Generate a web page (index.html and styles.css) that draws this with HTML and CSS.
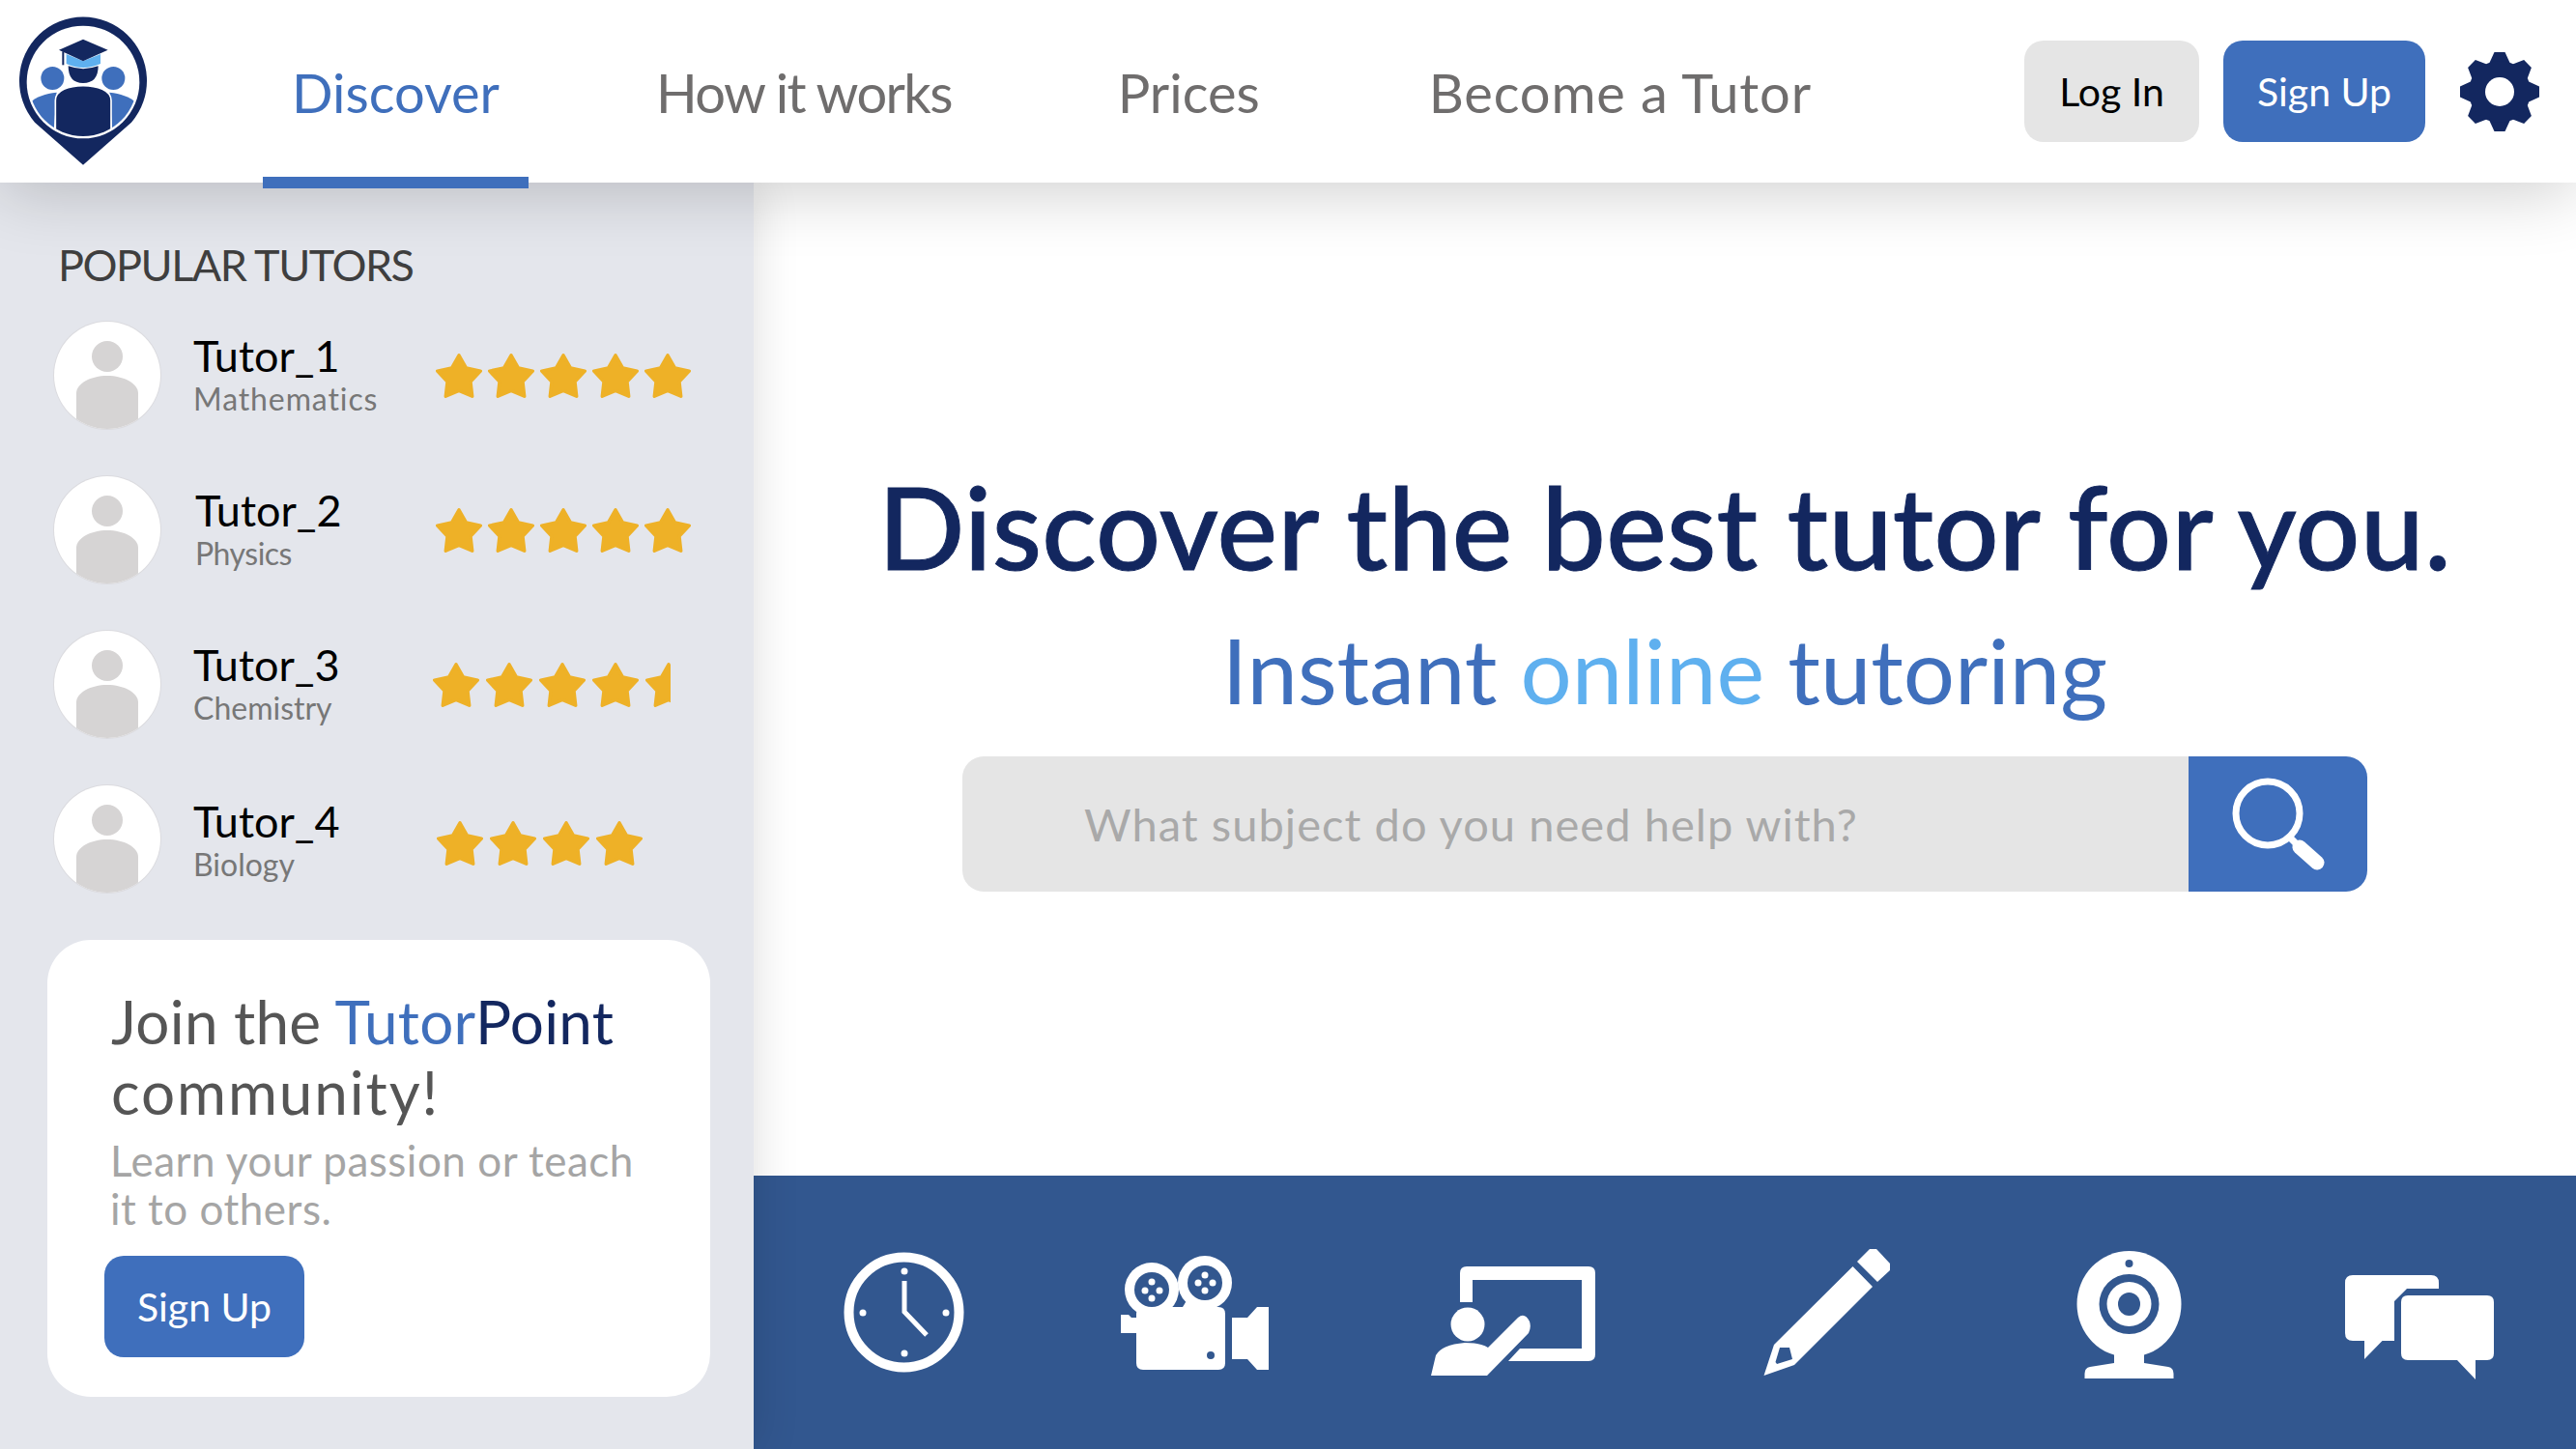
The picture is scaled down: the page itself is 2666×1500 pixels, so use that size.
FILE: index.html
```html
<!doctype html>
<html lang="en">
  <head>
    <meta charset="UTF-8" />
    <title>TutorPoint</title>
    <link rel="stylesheet" href="styles.css">
  </head>
  <body>
    <svg class="defs" aria-hidden="true">
      <symbol id="star" viewBox="3 3 42 40">
        <path d="M24 4.500 30.600 16 43.500 18.700 34.500 28.400 36 41.600 24 36.500 12 41.600 13.500 28.400 4.500 18.700 17.400 16Z" fill="#eeb127" stroke="#eeb127" stroke-width="3" stroke-linejoin="round" />
      </symbol>
      <symbol id="person" viewBox="0 0 110 111">
        <ellipse cx="55" cy="36" rx="16" ry="16" fill="#d6d4d4" />
        <path d="M23 111V74C23 64 38 56 55 56S87 64 87 74V111Z" fill="#d6d4d4" />
      </symbol>
    </svg>

    <header class="topbar">
      <a class="logo" href="#">
        <svg viewBox="0 0 600 570" width="200" height="190">
          <defs>
            <clipPath id="logoClip"><circle cx="258" cy="255" r="168" /></clipPath>
          </defs>
          <path d="M258 512 108 380A198 198 0 1 1 408 380Z" fill="#13275f" />
          <circle cx="258" cy="255" r="175" fill="#fff" />
          <g clip-path="url(#logoClip)">
            <circle cx="163" cy="243" r="36" fill="#3f6fbc" />
            <circle cx="352" cy="243" r="36" fill="#3f6fbc" />
            <path d="M90 320C115 300 140 290 176 287L166 420H90Z" fill="#3f6fbc" />
            <path d="M426 320C400 300 375 290 340 287L350 420H426Z" fill="#3f6fbc" />
            <path d="M172 440V312C172 280 215 266 258 266S345 280 345 312V440Z" fill="#13275f" stroke="#fff" stroke-width="5" />
          </g>
          <path d="M212 205Q258 222 305 205 305 258 258 258 212 258 212 205Z" fill="#13275f" />
          <path d="M206 168 258 190 312 168V198Q258 222 206 198Z" fill="#5fb0ef" />
          <path d="M183 155 258 122 335 155 258 190Z" fill="#13275f" />
          <rect x="193" y="160" width="6" height="42" fill="#13275f" />
        </svg>
      </a>
      <nav class="nav">
        <a class="nav-link active" href="#">Discover</a>
        <a class="nav-link nav-how" href="#">How it works</a>
        <a class="nav-link nav-prices" href="#">Prices</a>
        <a class="nav-link nav-become" href="#">Become a Tutor</a>
      </nav>
      <div class="actions">
        <button class="btn btn-grey">Log In</button>
        <button class="btn btn-blue">Sign Up</button>
        <svg class="gear" viewBox="-41 -41 82 82" width="82" height="82">
          <defs>
            <path id="tooth" d="M-11-29-5.500-41H5.500L11-29Z" fill="#13275f" />
          </defs>
          <use href="#tooth" />
          <use href="#tooth" transform="rotate(45)" />
          <use href="#tooth" transform="rotate(90)" />
          <use href="#tooth" transform="rotate(135)" />
          <use href="#tooth" transform="rotate(180)" />
          <use href="#tooth" transform="rotate(225)" />
          <use href="#tooth" transform="rotate(270)" />
          <use href="#tooth" transform="rotate(315)" />
          <circle r="32" fill="#13275f" />
          <circle r="15" fill="#fff" />
        </svg>
      </div>
    </header>

    <div class="content">
      <aside class="sidebar">
        <h2 class="side-title">POPULAR TUTORS</h2>
        <ul class="tutors">
          <li class="tutor">
            <svg class="avatar"><use href="#person" /></svg>
            <div class="tutor-info">
              <div class="tutor-name">Tutor_1</div>
              <div class="tutor-subject subject-wide">Mathematics</div>
            </div>
            <div class="stars">
              <svg class="star"><use href="#star" /></svg>
              <svg class="star"><use href="#star" /></svg>
              <svg class="star"><use href="#star" /></svg>
              <svg class="star"><use href="#star" /></svg>
              <svg class="star"><use href="#star" /></svg>
            </div>
          </li>
          <li class="tutor tutor-2">
            <svg class="avatar"><use href="#person" /></svg>
            <div class="tutor-info">
              <div class="tutor-name">Tutor_2</div>
              <div class="tutor-subject subject-tight">Physics</div>
            </div>
            <div class="stars">
              <svg class="star"><use href="#star" /></svg>
              <svg class="star"><use href="#star" /></svg>
              <svg class="star"><use href="#star" /></svg>
              <svg class="star"><use href="#star" /></svg>
              <svg class="star"><use href="#star" /></svg>
            </div>
          </li>
          <li class="tutor tutor-3">
            <svg class="avatar"><use href="#person" /></svg>
            <div class="tutor-info">
              <div class="tutor-name">Tutor_3</div>
              <div class="tutor-subject">Chemistry</div>
            </div>
            <div class="stars">
              <svg class="star"><use href="#star" /></svg>
              <svg class="star"><use href="#star" /></svg>
              <svg class="star"><use href="#star" /></svg>
              <svg class="star"><use href="#star" /></svg>
              <span class="star-half"><svg class="star"><use href="#star" /></svg></span>
            </div>
          </li>
          <li class="tutor tutor-4">
            <svg class="avatar"><use href="#person" /></svg>
            <div class="tutor-info">
              <div class="tutor-name">Tutor_4</div>
              <div class="tutor-subject">Biology</div>
            </div>
            <div class="stars">
              <svg class="star"><use href="#star" /></svg>
              <svg class="star"><use href="#star" /></svg>
              <svg class="star"><use href="#star" /></svg>
              <svg class="star"><use href="#star" /></svg>
            </div>
          </li>
        </ul>
        <section class="join">
          <h3 class="join-title">Join the <span class="c-blue">Tutor</span><span class="c-navy">Point</span> <span class="join-wide">community!</span></h3>
          <p class="join-text">Learn your passion or teach it to others.</p>
          <button class="btn btn-blue">Sign Up</button>
        </section>
      </aside>

      <main class="main">
        <section class="hero">
          <h1 class="hero-title">Discover the best tutor for you.</h1>
          <p class="hero-sub">Instant <span class="c-sky">online</span> tutoring</p>
          <form class="search">
            <input class="search-input" type="text" placeholder="What subject do you need help with?" />
            <button class="search-btn" type="button" aria-label="Search">
              <svg viewBox="0 0 185 140" width="185" height="140">
                <circle cx="82" cy="59" r="33" fill="none" stroke="#fff" stroke-width="7" />
                <path d="M105 84 114 93" stroke="#fff" stroke-width="7" />
                <path d="M115 94 133 110" stroke="#fff" stroke-width="15" stroke-linecap="round" />
              </svg>
            </button>
          </form>
        </section>

        <section class="features">
          <svg class="icon icon-clock" viewBox="873 1217 125 283" width="125" height="283">
            <circle cx="935.500" cy="1358.500" r="57" fill="none" stroke="#fff" stroke-width="10" />
            <path d="M936 1326V1358L959 1382" fill="none" stroke="#fff" stroke-width="5" />
            <circle cx="936" cy="1316" r="3.500" fill="#fff" />
            <circle cx="893" cy="1359" r="3.500" fill="#fff" />
            <circle cx="979" cy="1359" r="3.500" fill="#fff" />
            <circle cx="936" cy="1401" r="3.500" fill="#fff" />
          </svg>

          <svg class="icon icon-camera" viewBox="1160 1217 153 283" width="153" height="283">
            <path fill="#fff" d="M1183 1353H1261Q1268 1353 1268 1360V1411Q1268 1418 1261 1418H1183Q1176 1418 1176 1411V1380H1171L1168 1380H1160V1361H1168L1171 1364H1176V1360Q1176 1353 1183 1353Z" />
            <path fill="#fff" d="M1224 1353 1232 1340 1240 1353Z" />
            <path fill="#fff" d="M1275 1364H1291L1301 1353H1313V1418H1301L1291 1407H1275Z" />
            <circle cx="1253" cy="1403" r="4" fill="#32578f" />
            <circle cx="1192" cy="1335" r="28" fill="#fff" />
            <circle cx="1192" cy="1335" r="18" fill="#32578f" />
            <circle cx="1247" cy="1328" r="28" fill="#fff" />
            <circle cx="1247" cy="1328" r="18" fill="#32578f" />
            <g fill="#fff">
              <circle cx="1192" cy="1327" r="3.500" />
              <circle cx="1185" cy="1336" r="3.500" />
              <circle cx="1200" cy="1336" r="3.500" />
              <circle cx="1192" cy="1344" r="3.500" />
              <circle cx="1247" cy="1320" r="3.500" />
              <circle cx="1240" cy="1328" r="3.500" />
              <circle cx="1255" cy="1328" r="3.500" />
              <circle cx="1247" cy="1336" r="3.500" />
            </g>
          </svg>

          <svg class="icon icon-board" viewBox="1481 1217 170 283" width="170" height="283">
            <path fill="#fff" d="M1511 1348V1318Q1511 1311 1518 1311H1644Q1651 1311 1651 1318V1402Q1651 1409 1644 1409H1561L1573 1396H1637V1325H1524V1348Z" />
            <circle cx="1519" cy="1371" r="17.500" fill="#fff" />
            <path fill="#fff" d="M1481 1424 1486 1403Q1492 1392 1516 1390 1532 1390 1540 1395L1571 1364Q1578 1358 1583 1368 1585 1374 1582 1380L1539 1424Z" />
          </svg>

          <svg class="icon icon-pencil" viewBox="1825 1217 132 283" width="132" height="283">
            <path fill="#fff" d="M1922 1306 1935 1293H1942L1956 1308V1315L1943 1327Z" />
            <path fill="#fff" fill-rule="evenodd" d="M1917.500 1311 1938 1332 1857 1413 1825.500 1424 1836 1392ZM1837.500 1410 1842 1395H1852L1855 1407 1839 1412Z" />
          </svg>

          <svg class="icon icon-webcam" viewBox="2149 1217 109 283" width="109" height="283">
            <ellipse cx="2203.500" cy="1350" rx="54" ry="55" fill="#fff" />
            <path fill="#fff" d="M2188 1398H2219V1411L2244 1415Q2249.500 1416 2249.500 1422V1427H2157.500V1422Q2157.500 1416 2163 1415L2188 1411Z" />
            <ellipse cx="2203.500" cy="1308" rx="4" ry="4" fill="#32578f" />
            <ellipse cx="2203.500" cy="1350" rx="31" ry="31" fill="#32578f" />
            <ellipse cx="2203.500" cy="1350" rx="23" ry="23" fill="#fff" />
            <ellipse cx="2203.500" cy="1350" rx="11.500" ry="12" fill="#32578f" />
          </svg>

          <svg class="icon icon-chat" viewBox="2427 1217 154 283" width="154" height="283">
            <path fill="#fff" d="M2524 1334H2491L2478 1347V1388H2465.500L2447 1407V1388H2435Q2427 1388 2427 1380V1328Q2427 1320 2435 1320H2516Q2524 1320 2524 1328Z" />
            <path fill="#fff" d="M2492 1341H2574Q2581 1341 2581 1348V1401Q2581 1408 2574 1408H2562V1428L2543 1408H2492Q2485 1408 2485 1401V1348Q2485 1341 2492 1341Z" />
          </svg>
        </section>
      </main>
    </div>
  </body>
</html>
```

FILE: styles.css
```css
:root {
  --navy: #13275f;
  --blue: #3f6fbc;
  --sky: #5fb0ef;
  --band: #32578f;
  --side: #e4e6ec;
  --grey: #e5e5e5;
}

* {
  box-sizing: border-box;
}

body {
  font-family: Lato, "Open Sans", sans-serif;
  margin: 0;
  height: 1500px;
  overflow: hidden;
  background: #fff;
  display: flex;
  flex-direction: column;
}

a {
  text-decoration: none;
  color: inherit;
}

.defs {
  display: none;
}

/* header */
.topbar {
  height: 189px;
  display: flex;
  background: #fff;
  position: relative;
  z-index: 2;
  box-shadow: 0 8px 70px rgba(0, 0, 0, 0.2);
}

.logo {
  width: 200px;
  display: block;
}

.nav {
  display: flex;
  margin-left: 72px;
  gap: 102px;
  height: 195px;
}

.nav-link {
  padding: 0 30px;
  font-size: 56px;
  line-height: 192px;
  color: #6f6d6d;
  border-bottom: 12px solid transparent;
}

.nav-link.active {
  color: var(--blue);
  border-color: var(--blue);
}

.nav-how {
  letter-spacing: -1.65px;
}

.nav-prices {
  margin-left: 10px;
}

.nav-become {
  margin-left: 13px;
  letter-spacing: 0.85px;
}

.actions {
  margin-left: auto;
  display: flex;
  align-items: center;
  padding-right: 38px;
}

.btn {
  font-family: inherit;
  font-size: 41px;
  height: 105px;
  width: 209px;
  padding: 0;
  border: none;
  border-radius: 20px;
}

.btn-grey {
  background: var(--grey);
  color: #000;
  width: 181px;
  margin-right: 25px;
}

.btn-blue {
  background: var(--blue);
  color: #fff;
}

.gear {
  margin-left: 36px;
}

/* left column */
.content {
  flex: 1;
  display: flex;
  min-height: 0;
}

.sidebar {
  width: 780px;
  background: var(--side);
  padding: 0 45px 0 49px;
  position: relative;
  z-index: 1;
  box-shadow: 0 0 45px rgba(0, 0, 0, 0.14);
}

.side-title {
  font-size: 45px;
  font-weight: 400;
  letter-spacing: -1.5px;
  line-height: 54px;
  color: #3f3f3f;
  margin: 58px 0 0 11px;
}

.tutors {
  list-style: none;
  margin: 32px 0 0 7px;
  padding: 0;
}

.tutor {
  display: flex;
  align-items: center;
  height: 111px;
  margin-bottom: 49px;
}

.avatar {
  width: 110px;
  height: 111px;
  background: #fff;
  border-radius: 50%;
  box-shadow: 0 0 0 1px #dbdbdf;
  flex: none;
}

.tutor-info {
  width: 251px;
  margin-left: 34px;
  padding-bottom: 3px;
}

.tutor-name {
  font-size: 45px;
  line-height: 48px;
  color: #000;
}

.tutor-subject {
  font-size: 32px;
  line-height: 36px;
  margin-top: 3px;
  color: #777;
}

.subject-wide {
  letter-spacing: 0.9px;
}

.subject-tight {
  letter-spacing: -0.5px;
}

.tutor-2 .tutor-info {
  margin-left: 36px;
  width: 249px;
}

.tutor-3 .tutor-info {
  width: 248px;
}

.tutor-3 .stars,
.tutor-4 .stars {
  gap: 7px;
}

.tutor-4 .tutor-info {
  padding-top: 5px;
}

.tutor-4 .stars {
  margin-top: 8px;
  margin-left: 1px;
}

.stars {
  display: flex;
  gap: 6px;
}

.star {
  width: 48px;
  height: 46px;
  display: block;
}

.star-half {
  display: block;
  width: 26px;
  overflow: hidden;
}

.join {
  background: #fff;
  border-radius: 45px;
  height: 473px;
  width: 686px;
  padding: 48px 66px 0;
}

.join-title {
  font-size: 62px;
  font-weight: 400;
  letter-spacing: 0.27px;
  line-height: 73px;
  color: #555;
  margin: 0;
}

.join-wide {
  letter-spacing: 1.9px;
}

.join-text {
  font-size: 44px;
  letter-spacing: 0.5px;
  line-height: 50px;
  color: #a5a5a5;
  margin: 9px 0 24px -1px;
}

.join .btn {
  margin-left: -7px;
  width: 207px;
}

.c-blue {
  color: var(--blue);
}

.c-navy {
  color: var(--navy);
}

.c-sky {
  color: var(--sky);
}

/* right column */
.main {
  flex: 1;
  display: flex;
  flex-direction: column;
}

.hero {
  flex: 1;
  display: flex;
  flex-direction: column;
  align-items: center;
  padding-top: 286px;
}

.hero-title {
  font-size: 118px;
  font-weight: 500;
  letter-spacing: 0.28px;
  -webkit-text-stroke: 1px var(--navy);
  line-height: 140px;
  color: var(--navy);
  margin: 0;
}

.hero-sub {
  font-size: 94px;
  line-height: 120px;
  color: var(--blue);
  margin: 18px 0 0;
}

.search {
  display: flex;
  width: 1454px;
  height: 140px;
  margin-top: 30px;
  border-radius: 22px;
  overflow: hidden;
}

.search-input {
  flex: 1;
  border: none;
  background: var(--grey);
  font-family: inherit;
  font-size: 47px;
  letter-spacing: 1.05px;
  padding: 0 0 0 126px;
}

.search-input::placeholder {
  color: #a9a9a9;
  opacity: 1;
}

.search-btn {
  width: 185px;
  border: none;
  background: var(--blue);
  padding: 0;
}

.search-btn svg {
  display: block;
}

.features {
  height: 283px;
  background: var(--band);
  display: flex;
  padding-left: 93px;
  gap: 168px;
}

.icon {
  flex: none;
}

.icon-camera {
  margin-left: -6px;
}

.icon-pencil {
  margin-left: 6px;
}

.icon-webcam {
  margin-left: 24px;
}

.icon-chat {
  margin-left: 1px;
}
```
